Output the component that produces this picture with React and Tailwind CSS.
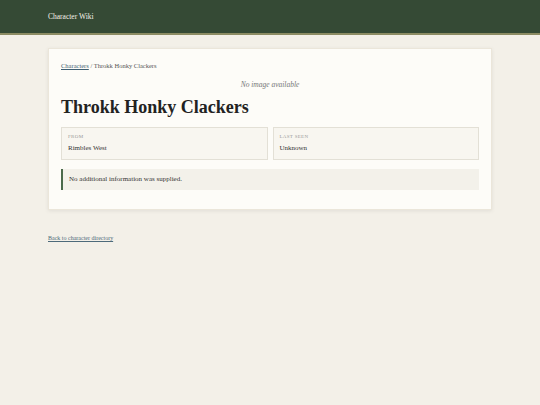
export default function App() {
  return (
    <div className="min-h-[405px] bg-[#f3f0e8] font-['Liberation_Serif',serif] text-[#2b2b2b]">
      <header className="h-[35px] bg-[#354a35] border-b-2 border-[#8c8c63] flex items-center px-[48px]">
        <span className="text-[7.5px] text-[#f6f3ea]">Character Wiki</span>
      </header>
      <main className="px-[48px] pt-[13px]">
        <div className="w-[444px] bg-[#fdfcf8] border border-[#ebe6da] shadow-[0_1px_4px_rgba(0,0,0,0.08)] px-[12px] pt-[12px] pb-[19px]">
          <div className="text-[6.5px] text-[#555]">
            <a className="underline text-[#3f5f73]">Characters</a> / Throkk Honky Clackers
          </div>
          <div className="text-center italic text-[7.5px] text-[#777] mt-[8px]">No image available</div>
          <h1 className="text-[18px] font-bold leading-none mt-[8px] text-[#222]">Throkk Honky Clackers</h1>
          <div className="grid grid-cols-2 gap-[5px] mt-[11px]">
            <div className="bg-[#f8f6f0] border border-[#e3e0d6] h-[33px] px-[6px] pt-[5px]">
              <div className="text-[5px] uppercase tracking-[0.06em] text-[#999]">From</div>
              <div className="text-[7px] mt-[2px] text-[#333]">Rimbles West</div>
            </div>
            <div className="bg-[#f8f6f0] border border-[#e3e0d6] h-[33px] px-[6px] pt-[5px]">
              <div className="text-[5px] uppercase tracking-[0.06em] text-[#999]">Last seen</div>
              <div className="text-[7px] mt-[2px] text-[#333]">Unknown</div>
            </div>
          </div>
          <div className="mt-[9px] h-[21px] bg-[#f3f1ea] border-l-2 border-[#4b6a4b] flex items-center px-[6px] text-[7px] text-[#333]">
            No additional information was supplied.
          </div>
        </div>
        <div className="mt-[24px] text-[6px]">
          <a className="underline text-[#4d6a7a]">Back to character directory</a>
        </div>
      </main>
    </div>
  );
}
